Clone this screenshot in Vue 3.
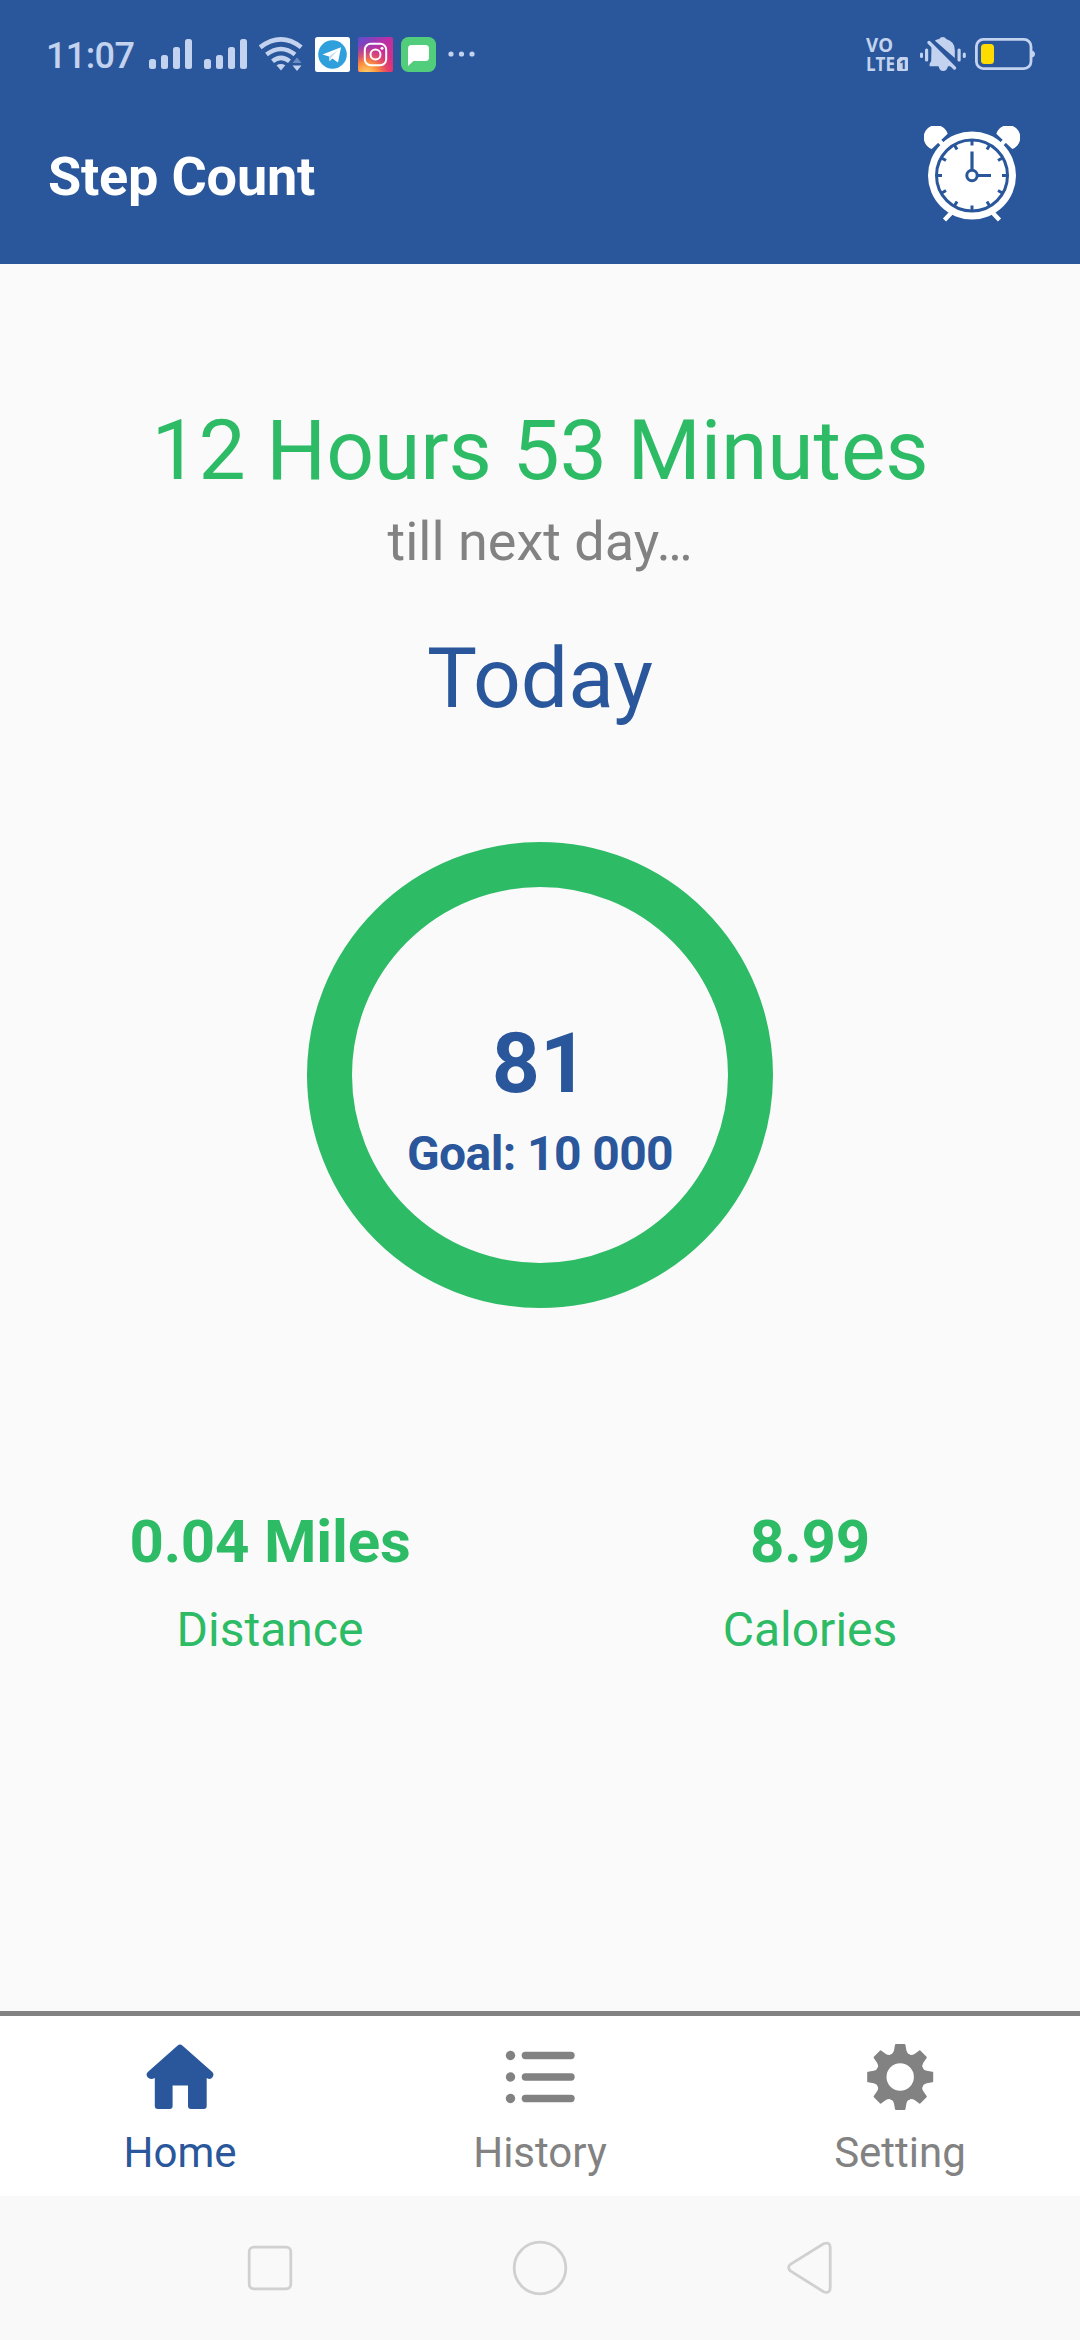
<script setup>
const time = '11:07'
const stats = [
  { value: '0.04 Miles', label: 'Distance' },
  { value: '8.99', label: 'Calories' },
]
const tabs = [
  { id: 'home', label: 'Home' },
  { id: 'history', label: 'History' },
  { id: 'setting', label: 'Setting' },
]
const active = 'home'
const ticks = [0, 30, 60, 90, 120, 150, 180, 210, 240, 270, 300, 330]
const teeth = [0, 45, 90, 135, 180, 225, 270, 315]
</script>

<template>
  <div class="screen">
    <header class="header">
      <div class="status">
        <div class="status-left">
          <span class="time">{{ time }}</span>
          <svg v-for="n in 2" :key="n" class="signal" width="43" height="30" viewBox="0 0 43 30">
            <rect x="0" y="20" width="7" height="10" rx="2.5" />
            <rect x="12" y="16" width="7" height="14" rx="2.5" />
            <rect x="24" y="8" width="7" height="22" rx="2.5" />
            <rect x="36" y="0" width="7" height="30" rx="2.5" />
          </svg>
          <svg class="wifi" width="44" height="34" viewBox="0 0 44 34">
            <g fill="none" stroke="#c3d2ee" stroke-width="4.6">
              <path d="M1.2 10.3Q22 -5.4 42.2 10.3" />
              <path d="M7.5 17.5Q22 6.5 36 17.5" />
              <path d="M13.5 24.3Q22 17.5 30.5 24.3" />
            </g>
            <path d="M17.5 28.3Q22 25.5 26.3 28.3L22 33.5Z" fill="#c3d2ee" />
            <path d="M33.5 26L38 20.5L42.5 26Z" fill="#6d8cc4" />
            <path d="M33.5 28.5H42.5L38 34Z" fill="#c3d2ee" />
          </svg>
          <svg class="app-icon first" width="35" height="35" viewBox="0 0 35 35">
            <rect width="35" height="35" rx="2.5" fill="#fff" />
            <circle cx="17.5" cy="17.5" r="14.3" fill="#2fa0db" />
            <path d="M7.5 17.4L26 10.3L23 25.6L17.3 21.6L14.6 24.3L14 19.6Z" fill="#fff" />
            <path d="M14 19.6L22.5 13.5L16 20.8L14.6 24.3Z" fill="#b9dcf2" />
          </svg>
          <svg class="app-icon" width="35" height="35" viewBox="0 0 35 35">
            <defs>
              <linearGradient id="ig-base" x1="0" y1="0" x2="1" y2="1">
                <stop offset="0" stop-color="#5b4fd0" />
                <stop offset=".45" stop-color="#bb2fa5" />
                <stop offset="1" stop-color="#e62f72" />
              </linearGradient>
              <radialGradient id="ig-glow" cx=".25" cy="1.05" r=".85">
                <stop offset="0" stop-color="#ffd669" />
                <stop offset=".4" stop-color="#fb8a3c" />
                <stop offset="1" stop-color="#e1306c" stop-opacity="0" />
              </radialGradient>
            </defs>
            <rect width="35" height="35" rx="2" fill="url(#ig-base)" />
            <rect width="35" height="35" rx="2" fill="url(#ig-glow)" />
            <g fill="none" stroke="#fff" stroke-width="2">
              <rect x="6.8" y="6.8" width="21.4" height="21.4" rx="6" />
              <circle cx="17.5" cy="17.5" r="5" />
            </g>
            <circle cx="24" cy="11.2" r="1.5" fill="#fff" />
          </svg>
          <svg class="app-icon" width="35" height="35" viewBox="0 0 35 35">
            <rect width="35" height="35" rx="7.5" fill="#51cd7b" />
            <path d="M10.5 8H24.5Q28 8 28 11.5V20.5Q28 24 24.5 24H12.5L7 29V11.5Q7 8 10.5 8Z" fill="#fff" />
          </svg>
          <svg class="more" width="27" height="6" viewBox="0 0 27 6">
            <circle cx="3" cy="3" r="2.6" />
            <circle cx="13.5" cy="3" r="2.6" />
            <circle cx="24" cy="3" r="2.6" />
          </svg>
        </div>
        <div class="status-right">
          <svg class="volte" width="54" height="36" viewBox="0 0 54 36">
            <text x="0" y="15" textLength="27" lengthAdjust="spacingAndGlyphs">VO</text>
            <text x="0" y="34" textLength="29" lengthAdjust="spacingAndGlyphs">LTE</text>
            <path d="M34 20H40.5Q42 20 42 21.5V32.500Q42 34 40.5 34H32.5Q31 34 31 32.500V23Z" />
            <text class="sim" x="33.2" y="32.2">1</text>
          </svg>
          <svg class="bell" width="46" height="34" viewBox="0 0 46 34">
            <g fill="#c3d2ee">
              <path d="M15 3.5Q17 2.4 19.3 2Q20.3 0 22.7 0Q25.2 0 26.2 2Q34.8 4.5 34.8 13V21L15 3.8Z" />
              <path d="M11.5 9.8L33.6 29.2H9.6V26.8L11.2 24Z" />
              <path d="M18.5 29H28Q27 34 23.2 34Q19.4 34 18.5 29Z" />
              <rect x="0" y="15.5" width="3" height="5.5" rx="1.5" />
              <rect x="5" y="11.5" width="3.2" height="13" rx="1.5" />
              <rect x="37.5" y="11.5" width="3.2" height="13" rx="1.5" />
              <rect x="42.8" y="15.5" width="3" height="5.5" rx="1.5" />
            </g>
            <path d="M11.500 3.500L37 28.500" stroke="#2a579b" stroke-width="3" />
            <path d="M9 5.5L34.5 31" stroke="#c3d2ee" stroke-width="3.4" stroke-linecap="round" />
          </svg>
          <svg class="battery" width="60" height="32" viewBox="0 0 60 32">
            <rect x="1.4" y="1.4" width="54.6" height="29.2" rx="7" fill="none" stroke="#c3d2ee" stroke-width="2.8" />
            <path d="M57 12.5Q60 13.5 60 16Q60 18.5 57 19.5Z" fill="#c3d2ee" />
            <rect x="6" y="6" width="13" height="20" rx="3.5" fill="#ffdc00" />
          </svg>
        </div>
      </div>
      <div class="title-bar">
        <h1>Step Count</h1>
        <svg class="clock" width="96" height="96" viewBox="0 0 96 96">
          <g fill="#fff">
            <path d="M7.700 23A12.300 12.300 0 1 1 23.700 7.800Z" />
            <path d="M88.300 23A12.300 12.300 0 1 0 72.300 7.800Z" />
          </g>
          <g stroke="#fff" stroke-width="4.4">
            <path d="M14 13.500L22 22M82 13.500L74 22M29 85L20.5 94M67 85L75.5 94" />
          </g>
          <circle cx="48" cy="49.5" r="44" fill="#fff" />
          <g stroke="#2a579b" stroke-width="3">
            <circle cx="48" cy="49.5" r="35.500" fill="none" />
            <path v-for="a in ticks" :key="a" d="M48 14V19.5" :transform="`rotate(${a} 48 49.5)`" />
            <path d="M48 25.5V44.500M53 49.5H67" stroke-width="3.2" />
            <circle cx="48" cy="49.5" r="5.2" fill="#fff" />
          </g>
        </svg>
      </div>
    </header>

    <main class="content">
      <p class="remaining">12 Hours 53 Minutes</p>
      <p class="until">till next day…</p>
      <h2>Today</h2>
      <div class="ring">
        <strong class="steps">81</strong>
        <span class="goal">Goal: 10 000</span>
      </div>
      <div class="stats">
        <div v-for="s in stats" :key="s.label" class="stat">
          <strong>{{ s.value }}</strong>
          <span>{{ s.label }}</span>
        </div>
      </div>
    </main>

    <nav class="tabs">
      <a v-for="t in tabs" :key="t.id" class="tab" :class="{ active: t.id === active }">
        <svg width="72" height="72" viewBox="0 0 72 72" fill="currentColor">
          <path
            v-if="t.id === 'home'"
            d="M33.4 5.7Q36 3.5 38.6 5.7L68.3 32Q70.5 34.2 68.5 37.2Q66.4 40.3 62.7 38V66Q62.7 69 59.7 69H47Q44 69 44 66V45.4H28.6V66Q28.6 69 25.6 69H13.8Q10.8 69 10.8 66V38Q6.2 40.3 3.6 37.2Q1.4 34.2 3.8 32Z"
          />
          <template v-else-if="t.id === 'history'">
            <g v-for="y in [15.5, 37, 58.5]" :key="y">
              <circle cx="6.5" :cy="y" r="4.7" />
              <rect x="17.7" :y="y - 3.7" width="53" height="7.4" rx="3.7" />
            </g>
          </template>
          <template v-else>
            <circle cx="36.2" cy="37" r="19" fill="none" stroke="currentColor" stroke-width="10.6" />
            <path
              v-for="a in teeth"
              :key="a"
              d="M26 15.5Q29.5 13.5 30 10.5L31 4.8Q31.2 4 32 4H40.4Q41.2 4 41.4 4.8L42.4 10.5Q42.9 13.5 46.4 15.5L43 20H29Z"
              :transform="`rotate(${a} 36.2 37)`"
            />
          </template>
        </svg>
        <span>{{ t.label }}</span>
      </a>
    </nav>

    <footer class="system-nav">
      <svg width="56" height="56" viewBox="0 0 56 56"><rect x="7.2" y="7.2" width="41.6" height="41.6" rx="4.5" /></svg>
      <svg width="56" height="56" viewBox="0 0 56 56"><circle cx="28" cy="28" r="25.8" /></svg>
      <svg width="56" height="56" viewBox="0 0 56 56"><path d="M8.4 24.3Q4.700 27.6 8.4 30.900L41.5 51.700Q48.200 54 48.200 47.700V7.500Q48.200 1.500 41.5 3.800Z" /></svg>
    </footer>
  </div>
</template>

<style>
body {
  margin: 0;
}
</style>

<style scoped>
.screen {
  display: flex;
  flex-direction: column;
  width: 1080px;
  height: 2340px;
  overflow: hidden;
  background: #fafafa;
  font-family: Roboto, "Liberation Sans", sans-serif;
}
h1, h2, p {
  margin: 0;
  font-weight: 400;
}
svg {
  display: block;
  flex: none;
}
.header {
  height: 264px;
  background: #2a579b;
}
.status {
  display: flex;
  justify-content: space-between;
  height: 108px;
  padding: 0 45px 0 46px;
  color: #c3d2ee;
}
.status-left,
.status-right {
  display: flex;
  align-items: center;
}
.time {
  width: 103px;
  padding-top: 3px;
  font-size: 36px;
  font-weight: 500;
  letter-spacing: -0.6px;
  line-height: 42px;
}
.signal {
  margin-right: 12px;
  fill: #c3d2ee;
}
.app-icon {
  margin-left: 8px;
}
.app-icon.first {
  margin-left: 12px;
}
.more {
  margin-left: 12px;
  fill: #c3d2ee;
}
.volte {
  margin-top: 2px;
  fill: #c3d2ee;
  font: 700 20px "Open Sans", sans-serif;
}
.volte .sim {
  fill: #2a579b;
  font-size: 13px;
}
.battery {
  margin-left: 9px;
}
.title-bar {
  display: flex;
  align-items: center;
  justify-content: space-between;
  height: 132px;
  padding: 0 60px 0 48px;
}
h1 {
  padding-top: 6px;
  color: #fff;
  font-size: 54px;
  font-weight: 700;
  letter-spacing: -0.2px;
  line-height: 64px;
}
.content {
  display: flex;
  flex: 1;
  flex-direction: column;
  align-items: center;
  padding-top: 138px;
}
.remaining {
  color: #2dbb66;
  font-size: 84px;
  letter-spacing: -0.1px;
  line-height: 98px;
}
.until {
  margin-top: 10px;
  color: #828282;
  font-size: 54px;
  line-height: 64px;
}
h2 {
  margin-top: 56px;
  color: #2a579b;
  font-size: 84px;
  line-height: 98px;
}
.ring {
  display: flex;
  flex-direction: column;
  align-items: center;
  box-sizing: border-box;
  width: 466px;
  height: 466px;
  margin-top: 114px;
  padding-top: 128px;
  border: 45px solid #2dbb66;
  border-radius: 50%;
  color: #2a579b;
}
.steps {
  font-size: 84px;
  line-height: 98px;
}
.goal {
  margin-top: 13px;
  font-size: 48px;
  font-weight: 700;
  letter-spacing: -0.6px;
  line-height: 56px;
  white-space: nowrap;
}
.stats {
  display: flex;
  width: 100%;
  margin-top: 199px;
}
.stat {
  display: flex;
  flex: 1;
  flex-direction: column;
  align-items: center;
  gap: 25px;
  color: #2dbb66;
}
.stat strong {
  font-size: 60px;
  letter-spacing: -0.2px;
  line-height: 70px;
}
.stat span {
  font-size: 48px;
  line-height: 56px;
}
.tabs {
  display: flex;
  box-sizing: border-box;
  height: 185px;
  padding-top: 24px;
  border-top: 5px solid #828282;
  background: #fff;
}
.tab {
  display: flex;
  flex: 1;
  flex-direction: column;
  align-items: center;
  gap: 16px;
  color: #828282;
  font-size: 42px;
  line-height: 50px;
}
.tab.active {
  color: #2a579b;
}
.system-nav {
  display: flex;
  align-items: center;
  justify-content: center;
  gap: 214px;
  height: 144px;
  background: #f9f9f9;
  fill: none;
  stroke: #d0d0d0;
  stroke-width: 2.8px;
}
</style>
